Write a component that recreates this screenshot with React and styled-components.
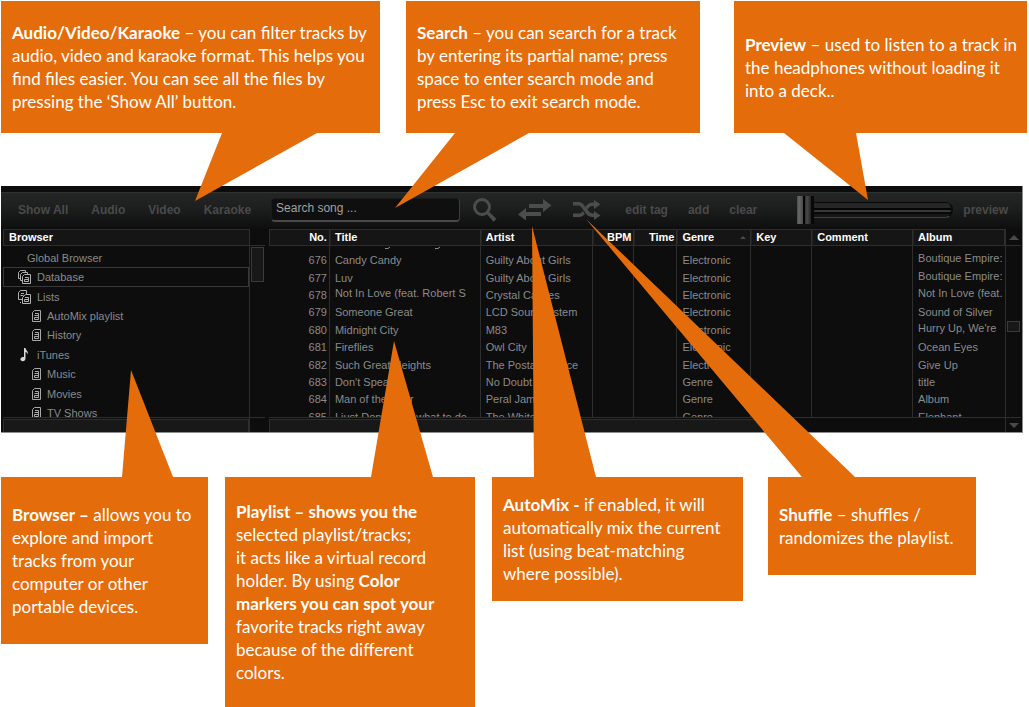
import { useState } from 'react'
import styled, { createGlobalStyle } from 'styled-components'

const ORANGE = '#e46c0a'
const LINE = '#2e2e2e'

const GlobalStyle = createGlobalStyle`
  * {
    box-sizing: border-box;
  }
  body {
    margin: 0;
    background: #fff;
    font-family: "Liberation Sans", Arial, sans-serif;
  }
`

const Page = styled.main`
  padding: 1px 2px 0 1px;
`

const NoteRow = styled.div`
  display: flex;
  align-items: ${p => p.$align || 'stretch'};
  padding-right: ${p => p.$end || 0}px;
`

const Note = styled.section`
  position: relative;
  flex: ${p => p.$grow} 1 0;
  min-width: 0;
  margin-left: ${p => p.$gap || 0}px;
  padding: ${p => p.$pad}px 0;
  display: flex;
  align-items: center;
  background: ${ORANGE};
  color: #fff;
  font-family: Lato, Carlito, sans-serif;
  font-size: 17px;
  line-height: 23px;
  white-space: nowrap;
  p {
    margin: 0;
    padding-left: 11px;
  }
`

// pointer between a note and the control it explains
const Tail = styled.svg`
  position: absolute;
  z-index: 2;
  left: 0;
  ${p => (p.$up ? 'bottom: 100%;' : 'top: 100%;')}
  width: 1px;
  height: 1px;
  overflow: visible;
  fill: ${ORANGE};
  pointer-events: none;
`

const Player = styled.section`
  margin: 53px 4px 44px 0;
  padding-top: 6px;
  background: #0d0d0d;
  border-right: 1px solid #8c8c8c;
  border-bottom: 1px solid #8c8c8c;
`

const Toolbar = styled.div`
  display: flex;
  align-items: center;
  height: 37px;
  padding: 0 14px 2px 17px;
  border-top: 1px solid #303232;
  background: linear-gradient(#242626, #1c1d1d 45%, #0e0e0e);
`

const Group = styled.div`
  display: flex;
  align-items: center;
  gap: ${p => p.$gap}px;
  margin-left: ${p => p.$left || 0}px;
`

const ToolButton = styled.button`
  display: block;
  padding: 0;
  border: 0;
  background: none;
  color: #4a4a4a;
  font: bold 12px/16px "Liberation Sans", Arial, sans-serif;
  white-space: nowrap;
  cursor: pointer;
  svg {
    display: block;
    fill: #4c4c4c;
  }
`

const Search = styled.input`
  flex: 1 1 0;
  min-width: 0;
  height: 24px;
  margin-left: 20px;
  padding: 0 4px 3px;
  border: 1px solid #1a1a1a;
  border-right-color: #3c3c3c;
  border-bottom: 2px solid #4a4a4a;
  border-radius: 4px;
  background: #0f0f0f;
  color: #a0a0a0;
  font: 12px "Liberation Sans", Arial, sans-serif;
  outline: none;
  &::placeholder {
    color: #a0a0a0;
    opacity: 1;
  }
`

const PreviewLabel = styled.label`
  display: flex;
  align-items: center;
  gap: 10px;
  margin-left: 40px;
  color: #4a4a4a;
  font: bold 12px/16px "Liberation Sans", Arial, sans-serif;
`

const Slider = styled.input`
  appearance: none;
  width: 156px;
  height: 28px;
  margin: 0;
  background: none;
  &::-webkit-slider-runnable-track {
    height: 16px;
    border: 0 solid #0a0a0a;
    border-right-width: 2px;
    border-bottom: 1px solid #404040;
    border-radius: 0 8px 8px 0;
    background: linear-gradient(
      #080808 0 1px, #262626 1px 6px, #050505 6px 8px,
      #383838 8px 10px, #080808 10px 12px, #161616 12px
    );
  }
  &::-webkit-slider-thumb {
    appearance: none;
    width: 17px;
    height: 28px;
    margin-top: -6px;
    background: linear-gradient(
      90deg,
      #4a4a4a 0, #686868 2px, #484848 6px, #050505 6px 8px,
      #2c2c2c 8px, #4a4a4a 10px, #222 14px, #080808 14px
    );
  }
`

const Panels = styled.div`
  display: flex;
  gap: 4px;
  padding: 0 1px 0 2px;
`

const Panel = styled.div`
  display: grid;
  grid-template-columns: minmax(0, 1fr) 15px;
  grid-template-rows: 17px 171px 15px;
  ${p => (p.$width ? `flex: 0 0 ${p.$width}px;` : 'flex: 1 1 0; min-width: 0;')}
`

const BrowserTitle = styled.h2`
  margin: 0;
  padding-left: 5px;
  border: 1px solid ${LINE};
  background: #151515;
  color: #fff;
  font-size: 11px;
  line-height: 15px;
`

const Corner = styled.div`
  display: flex;
  justify-content: center;
  align-items: center;
  border-bottom: 1px solid ${LINE};
`

const TreeView = styled.div`
  overflow: hidden;
  border-right: 1px solid ${LINE};
`

const Tree = styled.ul`
  display: flex;
  flex-direction: column;
  height: 177px;
  margin: 0;
  padding: 2px 0 0;
  list-style: none;
`

const TreeItem = styled.li`
  flex: 1 1 0;
  display: flex;
  align-items: center;
  gap: ${p => (p.$level === 2 ? 6 : 5)}px;
  padding-left: ${p => [23, 14, 28][p.$level]}px;
  border: 1px solid ${p => (p.$selected ? '#383838' : 'transparent')};
  color: #8a8a8a;
  font-size: 11px;
  svg {
    display: block;
  }
`

const ScrollTrack = styled.div`
  padding: ${p => p.$offset}px 1px 0;
`

const Thumb = styled.div`
  height: ${p => p.$height}px;
  border: 1px solid #3a3a3a;
  background: #181818;
`

const BottomBar = styled.div`
  padding-top: 1px;
  border-top: 1px solid ${LINE};
  border-right: 1px solid ${LINE};
`

const BottomThumb = styled.div`
  width: ${p => p.$width};
  height: 13px;
  border: 1px solid ${LINE};
  border-bottom: 0;
  background: #181818;
`

const BottomCorner = styled.div`
  display: flex;
  justify-content: center;
  align-items: center;
  border-top: 1px solid ${LINE};
`

const Arrow = styled.i`
  border: solid transparent;
  border-width: 0 ${p => p.$size}px;
  ${p => (p.$down ? 'border-top' : 'border-bottom')}: ${p => p.$size}px solid #4a4a4a;
`

const TableView = styled.div`
  grid-row: span 2;
  overflow: hidden;
  border-right: 1px solid ${LINE};
`

const Table = styled.table`
  width: 100%;
  height: 197px;
  table-layout: fixed;
  border-collapse: separate;
  border-spacing: 0;
  color: #8a8a8a;
  font-size: 11px;
  line-height: 13px;
`

const Th = styled.th`
  height: 17px;
  padding: 0 ${p => (p.$right ? 2 : 4)}px;
  border: 1px solid ${LINE};
  border-left-color: ${p => (p.$first ? LINE : '#222')};
  background: #151515;
  color: #fff;
  text-align: ${p => (p.$right ? 'right' : 'left')};
  white-space: nowrap;
`

const HeadLabel = styled.span`
  display: flex;
  align-items: center;
  justify-content: ${p => (p.$right ? 'flex-end' : 'space-between')};
`

const Td = styled.td`
  height: 17px;
  padding: 0 2px 0 5px;
  border-right: 1px solid ${LINE};
  text-align: ${p => (p.$right ? 'right' : 'left')};
  vertical-align: ${p => (p.$wrapped ? 'top' : 'middle')};
  white-space: nowrap;
  overflow: hidden;
  &:last-child {
    padding-right: 0;
    border-right: 0;
  }
`

// row that is scrolled almost completely under the header
const CutTd = styled(Td)`
  height: 6px;
  vertical-align: top;
  svg {
    display: block;
  }
`

const columns = [
  { label: 'No.', width: 61, right: true },
  { label: 'Title', width: 151 },
  { label: 'Artist', width: 112 },
  { label: 'BPM', width: 42, right: true },
  { label: 'Time', width: 43, right: true },
  { label: 'Genre', width: 74, sorted: true },
  { label: 'Key', width: 61 },
  { label: 'Comment', width: 101 },
  { label: 'Album', width: 92 },
]

const totalWidth = columns.reduce((sum, c) => sum + c.width, 0)

const tracks = [
  [676, 'Candy Candy', 'Guilty About Girls', 'Electronic', 'Boutique Empire:'],
  [677, 'Luv', 'Guilty About Girls', 'Electronic', 'Boutique Empire:'],
  [678, 'Not In Love (feat. Robert S', 'Crystal Castles', 'Electronic', 'Not In Love (feat.'],
  [679, 'Someone Great', 'LCD Soundsystem', 'Electronic', 'Sound of Silver'],
  [680, 'Midnight City', 'M83', 'Electronic', "Hurry Up, We're"],
  [681, 'Fireflies', 'Owl City', 'Electronic', 'Ocean Eyes'],
  [682, 'Such Great Heights', 'The Postal Service', 'Electronic', 'Give Up'],
  [683, "Don't Speak", 'No Doubt', 'Genre', 'title'],
  [684, 'Man of the Hour', 'Peral Jam', 'Genre', 'Album'],
  [685, 'I just Dont know what to do', 'The White Stripes', 'Genre', 'Elephant'],
]

const wrapped = ['Boutique Empire:', 'Not In Love (feat. Robert S', 'Not In Love (feat.', "Hurry Up, We're"]

const tree = [
  { label: 'Global Browser', level: 0 },
  { label: 'Database', level: 1, icon: 'stack', selected: true },
  { label: 'Lists', level: 1, icon: 'lists' },
  { label: 'AutoMix playlist', level: 2, icon: 'doc' },
  { label: 'History', level: 2, icon: 'doc' },
  { label: 'iTunes', level: 1, icon: 'note' },
  { label: 'Music', level: 2, icon: 'doc' },
  { label: 'Movies', level: 2, icon: 'doc' },
  { label: 'TV Shows', level: 2, icon: 'doc' },
]

function TreeIcon({ name }) {
  if (name === 'doc') {
    return (
      <svg width="9" height="12" viewBox="0 0 9 12" fill="none" stroke="#a8a8a8">
        <path d="M2.5 .5h6v11h-8v-9z" />
        <path d="M3 3.5h3.500v6h-4v-2h4M2.500 5.500h4" />
      </svg>
    )
  }
  if (name === 'stack') {
    return (
      <svg width="14" height="14" viewBox="0 0 14 14" fill="#0d0d0d" stroke="#b0b0b0">
        <path d="M2.500 .5h5v8h-7v-6z" />
        <path d="M4.500 2.500h5v8h-7v-6z" />
        <path d="M6.500 4.500h6v9h-8v-7z" />
        <path d="M7 7.500h3.500v4h-4v-2h4" />
      </svg>
    )
  }
  if (name === 'lists') {
    return (
      <svg width="14" height="14" viewBox="0 0 14 14" fill="#0d0d0d" stroke="#b0b0b0">
        <path d="M2.500 .5h6v9h-8v-7z" />
        <path d="M3 3.500h3M2.500 5.500h3M2 12.500h1" />
        <path d="M7.500 4.500h5v9h-8v-6z" />
        <path d="M7 7.500h3.500v4h-4v-2h4" />
      </svg>
    )
  }
  return (
    <svg width="14" height="14" viewBox="0 0 14 14" fill="#d8d8d8">
      <path d="M6 0h1.500c.2 2.200 3 3.200 2.400 6.400-.5-1.600-1.300-2.200-2.400-2.500v6.600c0 1.500-1.200 2.700-2.800 2.700-1.400 0-2.300-.8-2.300-1.900 0-1.300 1.200-2.400 2.600-2.400.4 0 .7 0 1 .2z" />
    </svg>
  )
}

function SearchIcon() {
  return (
    <svg width="24" height="24" viewBox="0 0 24 24">
      <path fillRule="evenodd" d="M9 0a9 9 0 1 0 0 18a9 9 0 1 0 0-18zM9 3a6 6 0 1 1 0 12a6 6 0 1 1 0-12z" />
      <path d="M13.500 15.800l2.300-2.300 7.700 7.300-3 3z" />
    </svg>
  )
}

function AutoMixIcon() {
  return (
    <svg width="34" height="22" viewBox="0 0 34 22">
      <path d="M11 5h14V0l8.500 6.500L25 13V9H11z" />
      <path d="M23 13H8V9L0 15.500 8 21.500V17h15z" />
    </svg>
  )
}

function ShuffleIcon() {
  return (
    <svg width="28" height="20" viewBox="0 0 28 20">
      <path d="M0 2h6c6 0 8 11.500 14 11.500h1V11l6.500 4.500-6.500 4.500v-3h-2C12 17 10 5.500 5.500 5.500H0z" />
      <path d="M0 13.500h5.500c2 0 3.200-1 4.400-2.600l1.900 2.800C10.200 16 8.500 17 6 17H0zM12.400 7C14 4.300 16 2.500 19.500 2.500H21V0l6.500 4.200L21 9V6h-1.500c-2.400 0-3.800 1.300-5.200 3.800z" />
    </svg>
  )
}

function App() {
  const [query, setQuery] = useState('')
  const [position, setPosition] = useState(0)

  return (
    <>
      <GlobalStyle />
      <Page>
        <NoteRow>
          <Note $grow={379} $pad={20}>
            <p>
              <b>Audio/Video/Karaoke</b> – you can filter tracks by<br />
              audio, video and karaoke format. This helps you<br />
              find files easier. You can see all the files by<br />
              pressing the ‘Show All’ button.
            </p>
            <Tail><path d="M221 0V-1H316V0L194 68z" /></Tail>
          </Note>
          <Note $grow={294} $gap={26} $pad={20}>
            <p>
              <b>Search</b> – you can search for a track<br />
              by entering its partial name; press<br />
              space to enter search mode and<br />
              press Esc to exit search mode.
            </p>
            <Tail><path d="M49 0V-1H123V0L-11 75z" /></Tail>
          </Note>
          <Note $grow={293} $gap={34} $pad={20}>
            <p>
              <b>Preview</b> – used to listen to a track in<br />
              the headphones without loading it<br />
              into a deck..
            </p>
            <Tail><path d="M50 0V-1H122V0L134 67z" /></Tail>
          </Note>
        </NoteRow>

        <Player>
          <Toolbar>
            <Group $gap={23}>
              <ToolButton>Show All</ToolButton>
              <ToolButton>Audio</ToolButton>
              <ToolButton>Video</ToolButton>
              <ToolButton>Karaoke</ToolButton>
            </Group>
            <Search
              aria-label="Search song"
              placeholder="Search song ..."
              value={query}
              onChange={e => setQuery(e.target.value)}
            />
            <Group $gap={21} $left={13}>
              <ToolButton aria-label="Search"><SearchIcon /></ToolButton>
              <ToolButton aria-label="AutoMix"><AutoMixIcon /></ToolButton>
              <ToolButton aria-label="Shuffle"><ShuffleIcon /></ToolButton>
            </Group>
            <Group $gap={20} $left={24}>
              <ToolButton>edit tag</ToolButton>
              <ToolButton>add</ToolButton>
              <ToolButton>clear</ToolButton>
            </Group>
            <PreviewLabel>
              <Slider
                type="range"
                min="0"
                max="100"
                value={position}
                onChange={e => setPosition(Number(e.target.value))}
              />
              preview
            </PreviewLabel>
          </Toolbar>

          <Panels>
            <Panel $width={262}>
              <BrowserTitle>Browser</BrowserTitle>
              <Corner />
              <TreeView>
                <Tree>
                  {tree.map(item => (
                    <TreeItem key={item.label} $level={item.level} $selected={item.selected}>
                      {item.icon && <TreeIcon name={item.icon} />}
                      {item.label}
                    </TreeItem>
                  ))}
                </Tree>
              </TreeView>
              <ScrollTrack $offset={1}><Thumb $height={35} /></ScrollTrack>
              <BottomBar><BottomThumb $width="100%" /></BottomBar>
              <BottomCorner />
            </Panel>

            <Panel>
              <TableView>
                <Table>
                  <colgroup>
                    {columns.map(c => (
                      <col key={c.label} style={{ width: `${(c.width / totalWidth) * 100}%` }} />
                    ))}
                  </colgroup>
                  <thead>
                    <tr>
                      {columns.map((c, i) => (
                        <Th key={c.label} $right={c.right} $first={i === 0}>
                          <HeadLabel $right={c.right}>
                            {c.label}
                            {c.sorted && <Arrow $size={3} />}
                          </HeadLabel>
                        </Th>
                      ))}
                    </tr>
                  </thead>
                  <tbody>
                    <tr>
                      <CutTd />
                      <CutTd>
                        <svg width="110" height="4" viewBox="0 0 110 4" fill="none" stroke="#8a8a8a">
                          <path d="M50 2.500h3l2-1.500M100 2.500h3l2-1.500" />
                        </svg>
                      </CutTd>
                      {columns.slice(2).map(c => <CutTd key={c.label} />)}
                    </tr>
                    {tracks.map(([no, title, artist, genre, album]) => (
                      <tr key={no}>
                        <Td $right>{no}</Td>
                        <Td $wrapped={wrapped.includes(title)}>{title}</Td>
                        <Td>{artist}</Td>
                        <Td />
                        <Td />
                        <Td>{genre}</Td>
                        <Td />
                        <Td />
                        <Td $wrapped={wrapped.includes(album)}>{album}</Td>
                      </tr>
                    ))}
                  </tbody>
                </Table>
              </TableView>
              <Corner><Arrow $size={5} /></Corner>
              <ScrollTrack $offset={75}><Thumb $height={11} /></ScrollTrack>
              <BottomBar><BottomThumb $width="70%" /></BottomBar>
              <BottomCorner><Arrow $down $size={5} /></BottomCorner>
            </Panel>
          </Panels>
        </Player>

        <NoteRow $align="flex-start" $end={51}>
          <Note $grow={207} $pad={26}>
            <p>
              <b>Browser –</b> allows you to<br />
              explore and import<br />
              tracks from your<br />
              computer or other<br />
              portable devices.
            </p>
            <Tail $up><path d="M121 2V1L130-106 172 1V2z" /></Tail>
          </Note>
          <Note $grow={250} $gap={17} $pad={23}>
            <p>
              <b>Playlist – shows you the</b><br />
              selected playlist/tracks;<br />
              it acts like a virtual record<br />
              holder. By using <b>Color</b><br />
              <b>markers you can spot your</b><br />
              favorite tracks right away<br />
              because of the different<br />
              colors.
            </p>
            <Tail $up><path d="M146 2V1L169-135 208 1V2z" /></Tail>
          </Note>
          <Note $grow={251} $gap={17} $pad={16}>
            <p>
              <b>AutoMix -</b> if enabled, it will<br />
              automatically mix the current<br />
              list (using beat-matching<br />
              where possible).
            </p>
            <Tail $up><path d="M42 2V1L40-250 104 1V2z" /></Tail>
          </Note>
          <Note $grow={208} $gap={25} $pad={26}>
            <p>
              <b>Shuffle</b> – shuffles /<br />
              randomizes the playlist.
            </p>
            <Tail $up><path d="M34 2V1L-182-257 87 1V2z" /></Tail>
          </Note>
        </NoteRow>
      </Page>
    </>
  )
}

export default App
